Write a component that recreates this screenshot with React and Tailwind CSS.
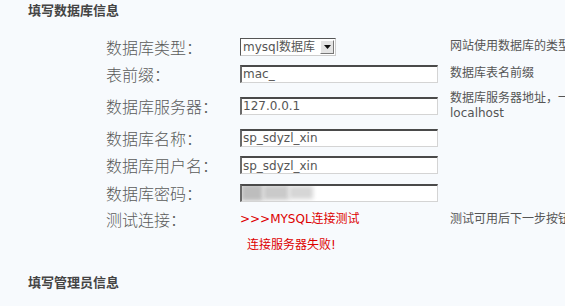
import React from "react";

const cjk = "font-['DejaVu_Sans','Noto_Sans_CJK_SC',sans-serif]";

const rows = [
  { label: "表前缀：", value: "mac_", desc: "数据库表名前缀", h: "h-[27px]" },
  { label: "数据库服务器：", value: "127.0.0.1", desc: "数据库服务器地址，一般为localhost", h: "h-[37px]", wrap: true },
  { label: "数据库名称：", value: "sp_sdyzl_xin", desc: "", h: "h-[27px]" },
  { label: "数据库用户名：", value: "sp_sdyzl_xin", desc: "", h: "h-[28px]" },
  { label: "数据库密码：", value: null, desc: "", h: "h-[28px]" },
];

const Label = ({ children }) => (
  <div className="w-[134px] shrink-0 text-[16px] leading-[20px] text-[#5a5a5a] font-['Noto_Sans_CJK_SC',sans-serif] font-light">
    {children}
  </div>
);

const Desc = ({ children, wrap }) => (
  <div
    className={`ml-[12px] w-[150px] shrink-0 text-[12px] leading-[15px] text-[#555] ${cjk} ${
      wrap ? "" : "whitespace-nowrap"
    }`}
  >
    {children}
  </div>
);

const TextBox = ({ value }) => (
  <div className="w-[198px] h-[18px] shrink-0 bg-white border-t-2 border-l-2 border-r border-b border-t-[#4a4a4a] border-l-[#6a6a6a] border-r-[#d4d4d4] border-b-[#d4d4d4] flex items-center pl-[1px] text-[12px] text-[#555] font-['DejaVu_Sans',sans-serif] overflow-hidden">
    {value === null ? (
      <div className="flex items-center ml-[-2px] mt-[-2px]">
        <span className="w-[22px] h-[17px] bg-[#bdbdbd] blur-[2px]" />
        <span className="w-[26px] h-[15px] bg-[#cacaca] blur-[2px]" />
        <span className="w-[24px] h-[13px] bg-[#d6d6d6] blur-[2px]" />
      </div>
    ) : (
      value
    )}
  </div>
);

export default function App() {
  return (
    <div className="w-[565px] h-[306px] overflow-hidden bg-[#f7fafd]">
      <div className="pl-[28px] h-[20px] leading-[20px] text-[13px] font-bold text-[#444] font-['Noto_Sans_CJK_SC',sans-serif]">
        填写数据库信息
      </div>

      <div className="mt-[13px] pl-[106px]">
        <div className="flex items-center h-[27px]">
          <Label>数据库类型：</Label>
          <div className="w-[96px] h-[18px] shrink-0 bg-white border border-t-[#555] border-l-[#555] border-r-[#ccc] border-b-[#ccc] flex items-center justify-between pl-[2px] pr-[1px]">
            <span className={`text-[12px] text-[#555] ${cjk} whitespace-nowrap`}>mysql数据库</span>
            <span className="w-[14px] h-[14px] bg-[#e4e4e4] border border-t-[#fff] border-l-[#fff] border-r-[#777] border-b-[#777] flex items-center justify-center">
              <svg width="7" height="4" viewBox="0 0 7 4">
                <path d="M0 0 H7 L3.5 4 Z" fill="#111" />
              </svg>
            </span>
          </div>
          <div className="w-[102px] shrink-0" />
          <Desc>网站使用数据库的类型</Desc>
        </div>

        {rows.map((r) => (
          <div key={r.label} className={`flex items-center ${r.h}`}>
            <Label>{r.label}</Label>
            <TextBox value={r.value} />
            <Desc wrap={r.wrap}>{r.desc}</Desc>
          </div>
        ))}

        <div className="flex items-center h-[24px]">
          <Label>测试连接：</Label>
          <div className={`w-[198px] shrink-0 text-[12px] text-[#dd0000] ${cjk} whitespace-nowrap`}>
            &gt;&gt;&gt;MYSQL连接测试
          </div>
          <Desc>测试可用后下一步按钮才可点击</Desc>
        </div>
      </div>

      <div className={`h-[27px] flex items-center pl-[247px] text-[12px] text-[#dd0000] ${cjk}`}>
        连接服务器失败!
      </div>

      <div className="mt-[14px] pl-[28px] h-[20px] leading-[20px] text-[13px] font-bold text-[#444] font-['Noto_Sans_CJK_SC',sans-serif]">
        填写管理员信息
      </div>
    </div>
  );
}
